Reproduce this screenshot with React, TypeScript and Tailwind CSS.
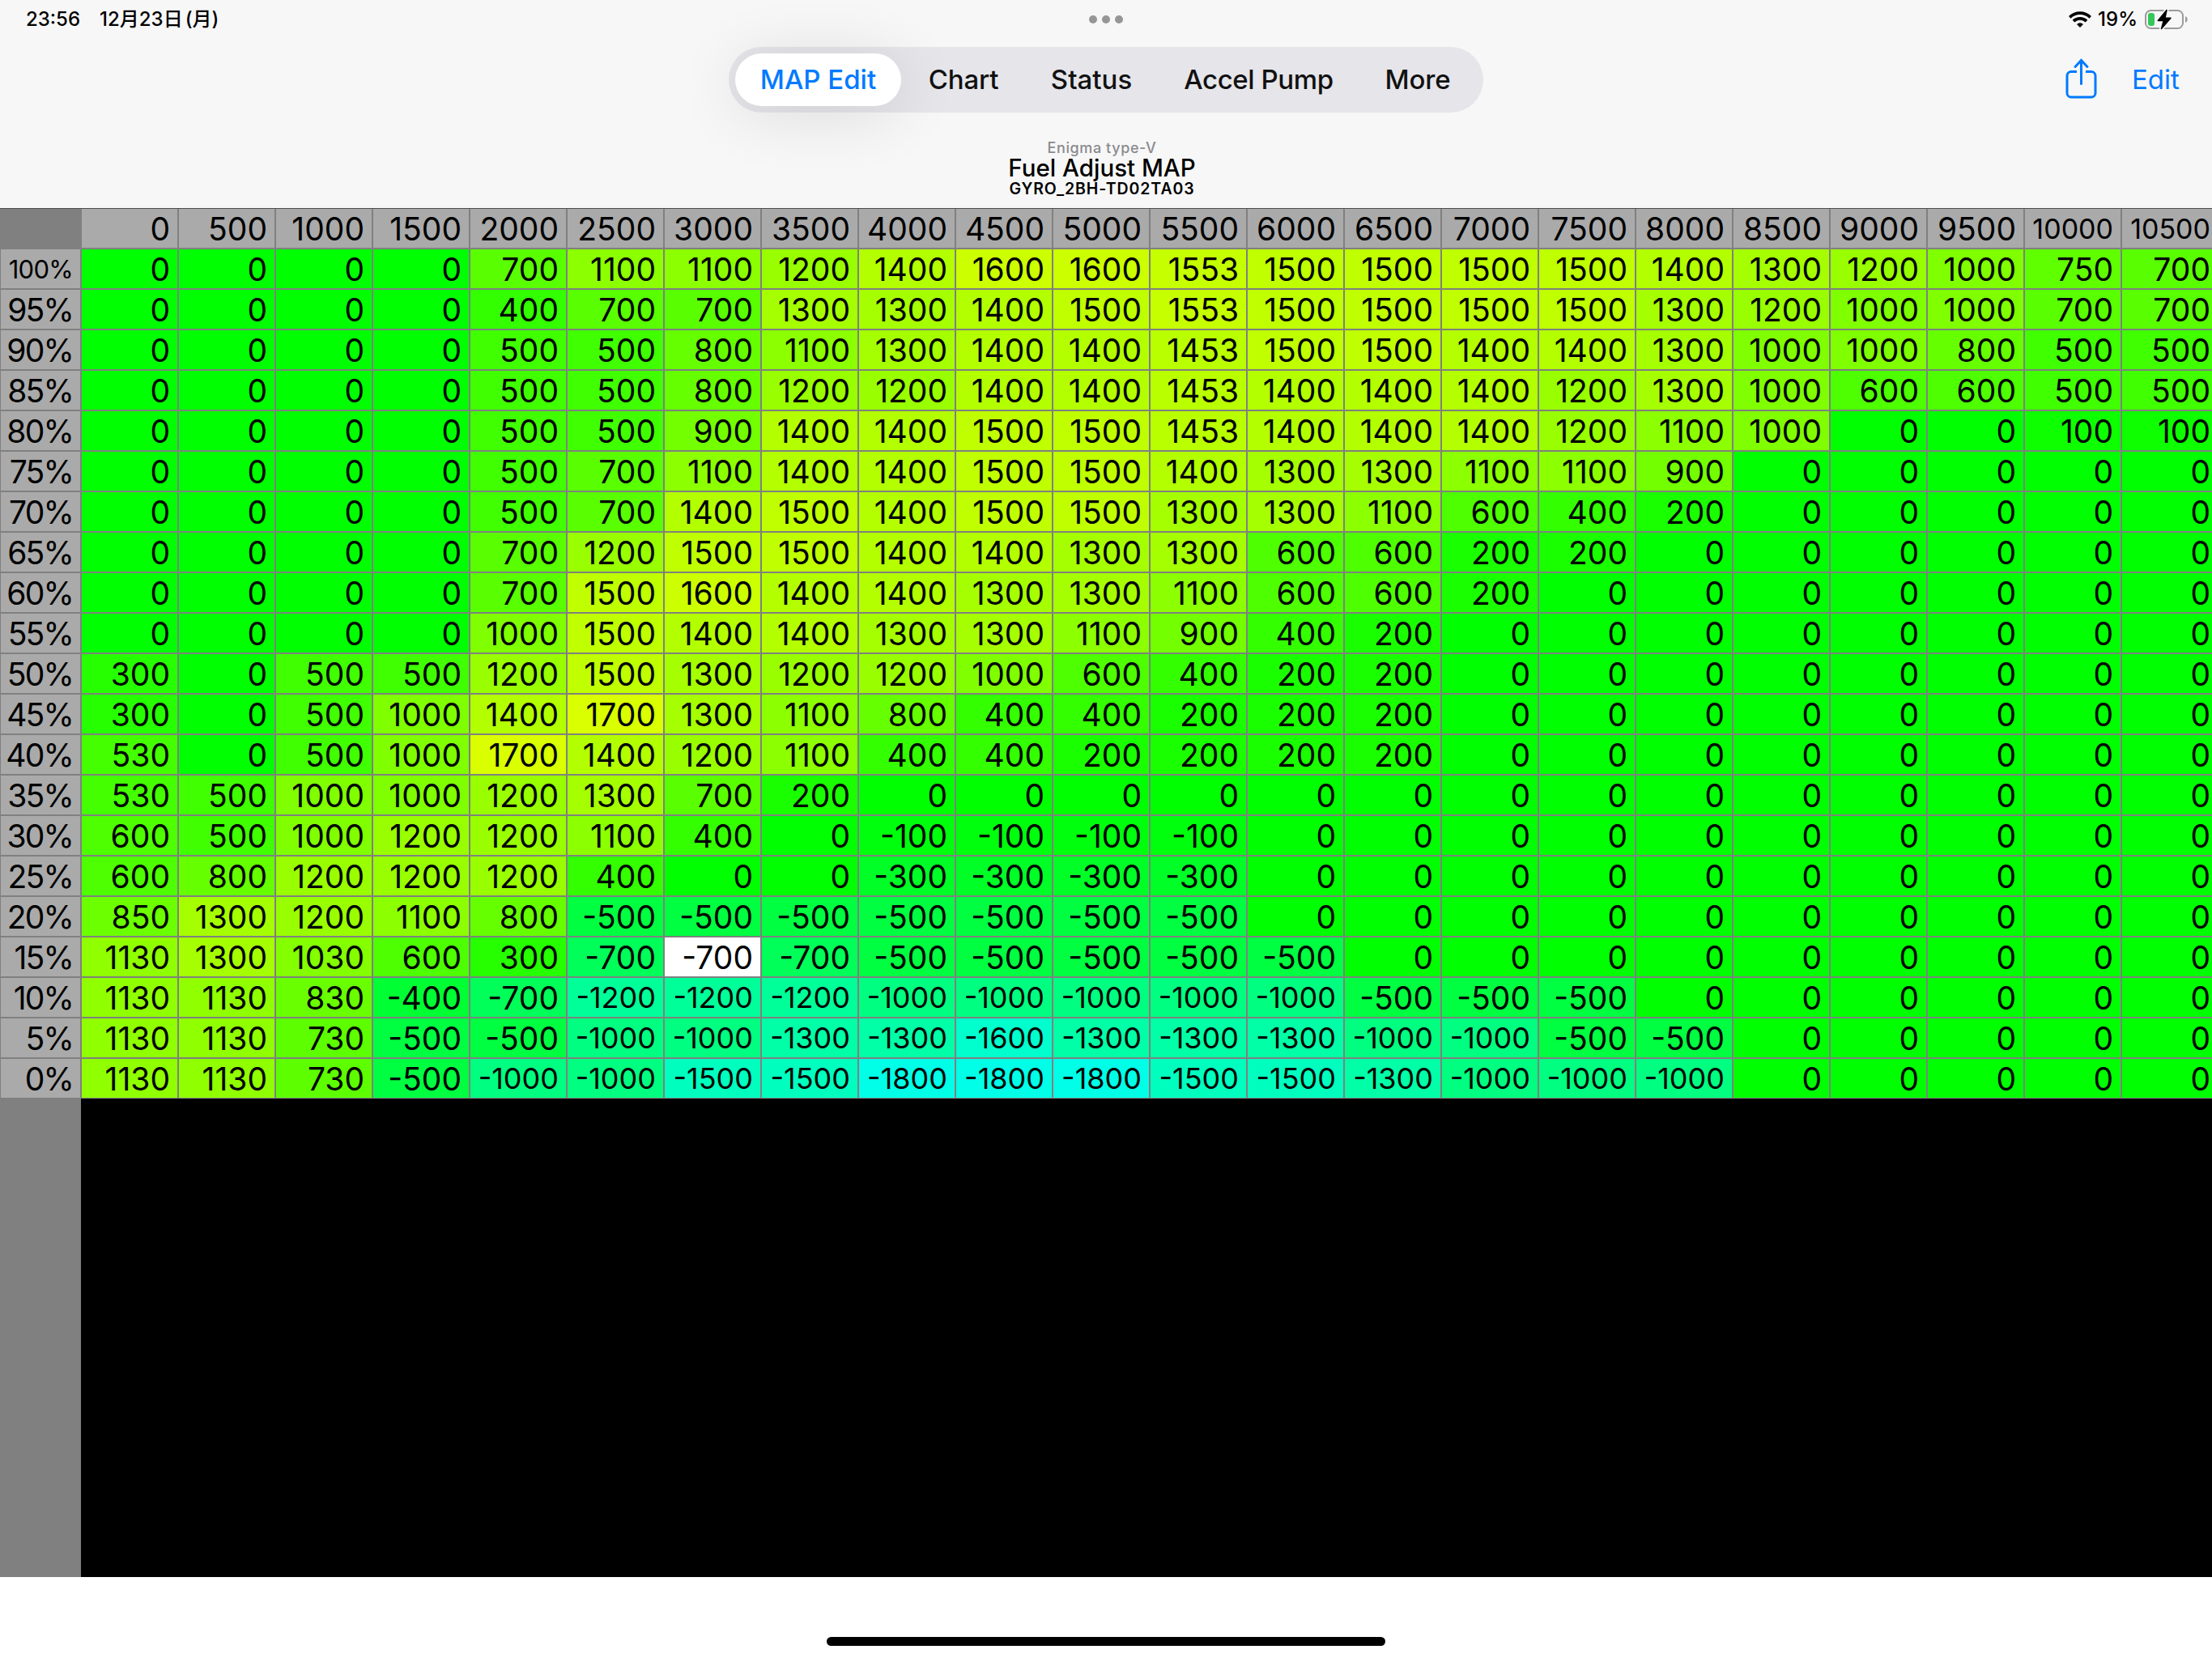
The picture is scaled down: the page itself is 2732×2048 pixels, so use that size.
const tabs = [
  { label: "MAP Edit", className: "w-[205px] rounded-full bg-white text-[#007aff] shadow-[0_8px_80px_rgba(0,0,0,0.12)]" },
  { label: "Chart", className: "w-[149px] text-[#111] tracking-[-0.2px]" },
  { label: "Status", className: "w-[162px] text-[#111]" },
  { label: "Accel Pump", className: "w-[246px] text-[#111] tracking-[-0.4px]" },
  { label: "More", className: "w-[142px] text-[#111] tracking-[-0.2px]" },
];

const rpm = Array.from({ length: 22 }, (_, i) => i * 500);

// one line per throttle position, from 100% down to 0% in 5% steps
const rows = `
0 0 0 0 700 1100 1100 1200 1400 1600 1600 1553 1500 1500 1500 1500 1400 1300 1200 1000 750 700
0 0 0 0 400 700 700 1300 1300 1400 1500 1553 1500 1500 1500 1500 1300 1200 1000 1000 700 700
0 0 0 0 500 500 800 1100 1300 1400 1400 1453 1500 1500 1400 1400 1300 1000 1000 800 500 500
0 0 0 0 500 500 800 1200 1200 1400 1400 1453 1400 1400 1400 1200 1300 1000 600 600 500 500
0 0 0 0 500 500 900 1400 1400 1500 1500 1453 1400 1400 1400 1200 1100 1000 0 0 100 100
0 0 0 0 500 700 1100 1400 1400 1500 1500 1400 1300 1300 1100 1100 900 0 0 0 0 0
0 0 0 0 500 700 1400 1500 1400 1500 1500 1300 1300 1100 600 400 200 0 0 0 0 0
0 0 0 0 700 1200 1500 1500 1400 1400 1300 1300 600 600 200 200 0 0 0 0 0 0
0 0 0 0 700 1500 1600 1400 1400 1300 1300 1100 600 600 200 0 0 0 0 0 0 0
0 0 0 0 1000 1500 1400 1400 1300 1300 1100 900 400 200 0 0 0 0 0 0 0 0
300 0 500 500 1200 1500 1300 1200 1200 1000 600 400 200 200 0 0 0 0 0 0 0 0
300 0 500 1000 1400 1700 1300 1100 800 400 400 200 200 200 0 0 0 0 0 0 0 0
530 0 500 1000 1700 1400 1200 1100 400 400 200 200 200 200 0 0 0 0 0 0 0 0
530 500 1000 1000 1200 1300 700 200 0 0 0 0 0 0 0 0 0 0 0 0 0 0
600 500 1000 1200 1200 1100 400 0 -100 -100 -100 -100 0 0 0 0 0 0 0 0 0 0
600 800 1200 1200 1200 400 0 0 -300 -300 -300 -300 0 0 0 0 0 0 0 0 0 0
850 1300 1200 1100 800 -500 -500 -500 -500 -500 -500 -500 0 0 0 0 0 0 0 0 0 0
1130 1300 1030 600 300 -700 -700 -700 -500 -500 -500 -500 -500 0 0 0 0 0 0 0 0 0
1130 1130 830 -400 -700 -1200 -1200 -1200 -1000 -1000 -1000 -1000 -1000 -500 -500 -500 0 0 0 0 0 0
1130 1130 730 -500 -500 -1000 -1000 -1300 -1300 -1600 -1300 -1300 -1300 -1000 -1000 -500 -500 0 0 0 0 0
1130 1130 730 -500 -1000 -1000 -1500 -1500 -1800 -1800 -1800 -1500 -1500 -1300 -1000 -1000 -1000 0 0 0 0 0
`
  .trim()
  .split("\n")
  .map((line) => line.split(" ").map(Number));

const selected = { row: 17, col: 6 };

const cellColor = (value: number) => {
  const level = Math.round((Math.abs(value) / 2000) * 255);
  return value >= 0 ? `rgb(${level},255,0)` : `rgb(0,255,${level})`;
};

const textSize = (text: string) => {
  if (text === "100%") return "pt-0.5 text-[31px] tracking-[-0.7px]";
  if (text.endsWith("%")) return "pt-0.5 text-[39px] tracking-[-1.8px]";
  if (text.startsWith("-") && text.length === 5) return "text-[36px]";
  if (text.length === 5) return "text-[34px]";
  return "pt-0.5 text-[39px]";
};

const StatusBar = () => (
  <div className="flex h-12 items-center justify-between pl-8 pr-8 text-2xl font-medium">
    <div className="flex w-[400px] items-center gap-6">
      <span>23:56</span>
      <span>
        12月23日<span className="ml-[3px]">(月)</span>
      </span>
    </div>
    <div className="flex gap-1.5">
      <span className="h-2.5 w-2.5 rounded-full bg-[#969696]" />
      <span className="h-2.5 w-2.5 rounded-full bg-[#969696]" />
      <span className="h-2.5 w-2.5 rounded-full bg-[#969696]" />
    </div>
    <div className="flex w-[400px] items-center justify-end">
      <svg className="h-5 w-7" viewBox="0 0 28 20" fill="none" stroke="#000" strokeWidth="3.7">
        <path d="M1.3 7.3a18.2 18.2 0 0 1 25.4 0" />
        <path d="M6 12.2a11.5 11.5 0 0 1 16 0" />
        <path d="M14 20l-4-4.1a5.8 5.8 0 0 1 8 0z" fill="#000" stroke="none" />
      </svg>
      <span className="ml-2 w-[50px] tracking-[0.1px]">19%</span>
      <svg className="ml-2 mr-[-3px] h-[26px] w-[54px]" viewBox="0 0 54 26">
        <rect x="1" y="2" width="46" height="22" rx="6.5" fill="none" stroke="#9b9b9b" strokeWidth="2" />
        <path d="M50 9c3.6 1.2 3.6 6.800 0 8z" fill="#9b9b9b" />
        <rect x="4" y="5" width="8" height="16" rx="3" fill="#34c759" />
        <path d="M27 1.500L16.300 14.500H23.300L20.500 24.500 32 11.200H25z" fill="#f7f7f7" stroke="#f7f7f7" strokeWidth="5" strokeLinejoin="round" />
        <path d="M27 1.500L16.300 14.500H23.300L20.500 24.500 32 11.200H25z" fill="#000" stroke="#000" strokeWidth="1.5" strokeLinejoin="round" />
      </svg>
    </div>
  </div>
);

const Toolbar = () => (
  <div className="flex items-center justify-between pl-[40px] pr-[40px] pt-[10px]">
    <div className="w-[400px]" />
    <nav className="flex h-[81px] w-[932px] items-center gap-[2.5px] rounded-full bg-[#e5e5ea] pl-2 text-[33px] font-medium">
      {tabs.map((tab) => (
        <button key={tab.label} className={`h-[65px] shrink-0 whitespace-nowrap ${tab.className}`}>
          {tab.label}
        </button>
      ))}
    </nav>
    <div className="flex w-[400px] items-center justify-end gap-[42px] text-[#007aff]">
      <svg className="mb-[3px] h-[50px] w-10" viewBox="0 0 40 50" fill="none" stroke="currentColor" strokeWidth="3" strokeLinecap="round">
        <path d="M14 16.500H7a5 5 0 0 0-5 5V43a5 5 0 0 0 5 5h25a5 5 0 0 0 5-5V21.500a5 5 0 0 0-5-5h-7" strokeLinecap="butt" />
        <path d="M19.500 31.500V3.500M12 10.500l7.500-8 7.500 8" />
      </svg>
      <span className="w-[59px] text-[33px]">Edit</span>
    </div>
  </div>
);

const App = () => {
  return (
    <div className="flex h-[2048px] w-[2732px] flex-col overflow-hidden bg-white font-[Inter,'Noto_Sans_CJK_JP',sans-serif] text-black">
      <header className="flex h-[258px] shrink-0 flex-col border-b border-[#4d4d4d] bg-[#f7f7f7]">
        <StatusBar />
        <Toolbar />
        <div className="flex flex-col items-center pr-[10px] pt-[34px]">
          <span className="text-[18px] font-medium leading-[20px] tracking-[0.6px] text-[#8a8a8e]">Enigma type-V</span>
          <span className="text-[29.500px] font-medium leading-[29px]">Fuel Adjust MAP</span>
          <span className="pt-px text-[19.500px] font-semibold leading-[20px] tracking-[0.9px]">GYRO_2BH-TD02TA03</span>
        </div>
      </header>

      <main className="flex h-[1690px] shrink-0 bg-black">
        <div className="flex w-[100px] shrink-0 flex-col bg-[#808080]">
          <div className="h-[49px]" />
          {rows.map((_, r) => {
            const label = `${100 - r * 5}%`;
            return (
              <div
                key={label}
                className={`flex h-[50px] items-center justify-end border border-[#808080] bg-[#aaa] pr-[9px] ${textSize(label)}`}
              >
                {label}
              </div>
            );
          })}
        </div>
        <div className="flex grow flex-col overflow-hidden">
          <div className="flex">
            {rpm.map((value) => (
              <div
                key={value}
                className={`flex h-[49px] w-[120px] shrink-0 items-center justify-end border border-t-0 border-[#808080] bg-[#aaa] pr-[9px] ${textSize(String(value))}`}
              >
                {value}
              </div>
            ))}
          </div>
          {rows.map((row, r) => (
            <div key={r} className="flex">
              {row.map((value, c) => (
                <div
                  key={c}
                  className={`flex h-[50px] w-[120px] shrink-0 items-center justify-end border border-[#808080] pr-[9px] ${textSize(String(value))}`}
                  style={{ backgroundColor: r === selected.row && c === selected.col ? "#fff" : cellColor(value) }}
                >
                  {value}
                </div>
              ))}
            </div>
          ))}
        </div>
      </main>

      <footer className="flex grow items-end justify-center pb-[15px]">
        <div className="h-[11px] w-[690px] rounded-full bg-black" />
      </footer>
    </div>
  );
};

export default App;
